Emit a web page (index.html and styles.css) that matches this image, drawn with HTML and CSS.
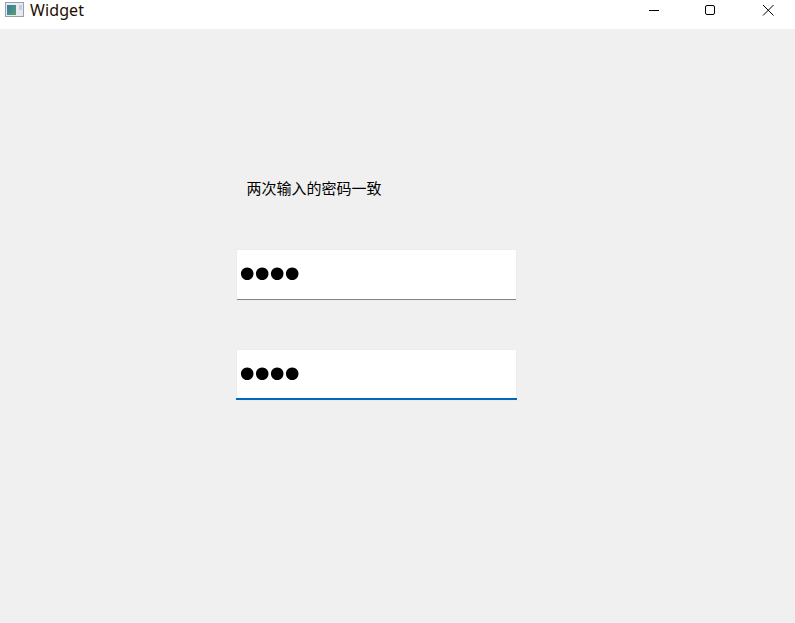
FILE: index.html
```html
<!DOCTYPE html>
<html lang="zh">
<head>
<meta charset="utf-8">
<title>Widget</title>
<link rel="stylesheet" href="styles.css">
</head>
<body>
<div class="window">
  <header class="titlebar">
    <div class="title-left">
      <svg class="app-icon" width="20" height="15" viewBox="0 0 20 15">
        <defs>
          <linearGradient id="pane" x1="0" y1="0" x2="1" y2="1">
            <stop offset="0" stop-color="#3a78a8"/>
            <stop offset="1" stop-color="#55a070"/>
          </linearGradient>
        </defs>
        <rect x="0.500" y="0.500" width="18" height="14" fill="#e6ebf1" stroke="#98a1ad"/>
        <rect x="2" y="3" width="9" height="10" fill="url(#pane)"/>
        <rect x="14" y="3" width="3" height="5" fill="#c3cedb"/>
      </svg>
      <span class="title-text">Widget</span>
    </div>
    <div class="controls">
      <svg class="ctl" width="58" height="29" viewBox="0 0 58 29"><path d="M28 10.500H38" stroke="#000" fill="none"/></svg>
      <svg class="ctl" width="58" height="29" viewBox="0 0 58 29"><rect x="26.500" y="5.500" width="9" height="9" rx="1.500" stroke="#000" fill="none"/></svg>
      <svg class="ctl" width="58" height="29" viewBox="0 0 58 29"><path d="M26 5L36.500 15.500M36.500 5L26 15.500" stroke="#000" fill="none"/></svg>
    </div>
  </header>
  <main class="content">
    <div class="form">
      <div class="message">两次输入的密码一致</div>
      <div class="field"><span class="mask">●●●●</span></div>
      <div class="field field-focus"><span class="mask">●●●●</span></div>
    </div>
  </main>
</div>
</body>
</html>
```
FILE: styles.css
```css
html, body {
  margin: 0;
  padding: 0;
  height: 100%;
  overflow: hidden;
}
.window {
  height: 623px;
  display: flex;
  flex-direction: column;
  background: #f0f0f0;
  font-family: "Noto Sans CJK SC", "Liberation Sans", sans-serif;
}
.titlebar {
  height: 29px;
  flex: none;
  background: #fff;
  display: flex;
  justify-content: space-between;
}
.title-left {
  display: flex;
  align-items: flex-start;
}
.app-icon {
  margin: 2px 0 0 5px;
}
.title-text {
  margin-left: 5px;
  font-family: "Noto Sans", "Liberation Sans", sans-serif;
  font-size: 16px;
  letter-spacing: 0.100px;
  line-height: 21px;
  color: #1c0f00;
}
.controls {
  display: flex;
}
.ctl {
  display: block;
}
.content {
  flex: 1;
  padding: 148px 0 0 237px;
}
.form {
  width: 279px;
  display: flex;
  flex-direction: column;
}
.message {
  height: 22px;
  margin-bottom: 51px;
  padding-left: 9.500px;
  font-size: 15px;
  line-height: 22px;
  color: #000;
}
.field {
  position: relative;
  height: 49px;
  margin-bottom: 50px;
  background: #fff;
  box-shadow: 0 0 0 1px #ececec;
  border-bottom: 1px solid #868686;
  padding-left: 3px;
  font-family: "DejaVu Sans", sans-serif;
  font-size: 16.500px;
  letter-spacing: 0.600px;
  line-height: 46px;
  color: #000;
}
.mask {
  display: inline-block;
  will-change: transform;
}
.field-focus {
  border-bottom: 0;
  height: 50px;
}
.field-focus::after {
  content: "";
  position: absolute;
  left: -1px;
  right: -1px;
  bottom: 0;
  height: 2px;
  background: #0067c0;
}
```
